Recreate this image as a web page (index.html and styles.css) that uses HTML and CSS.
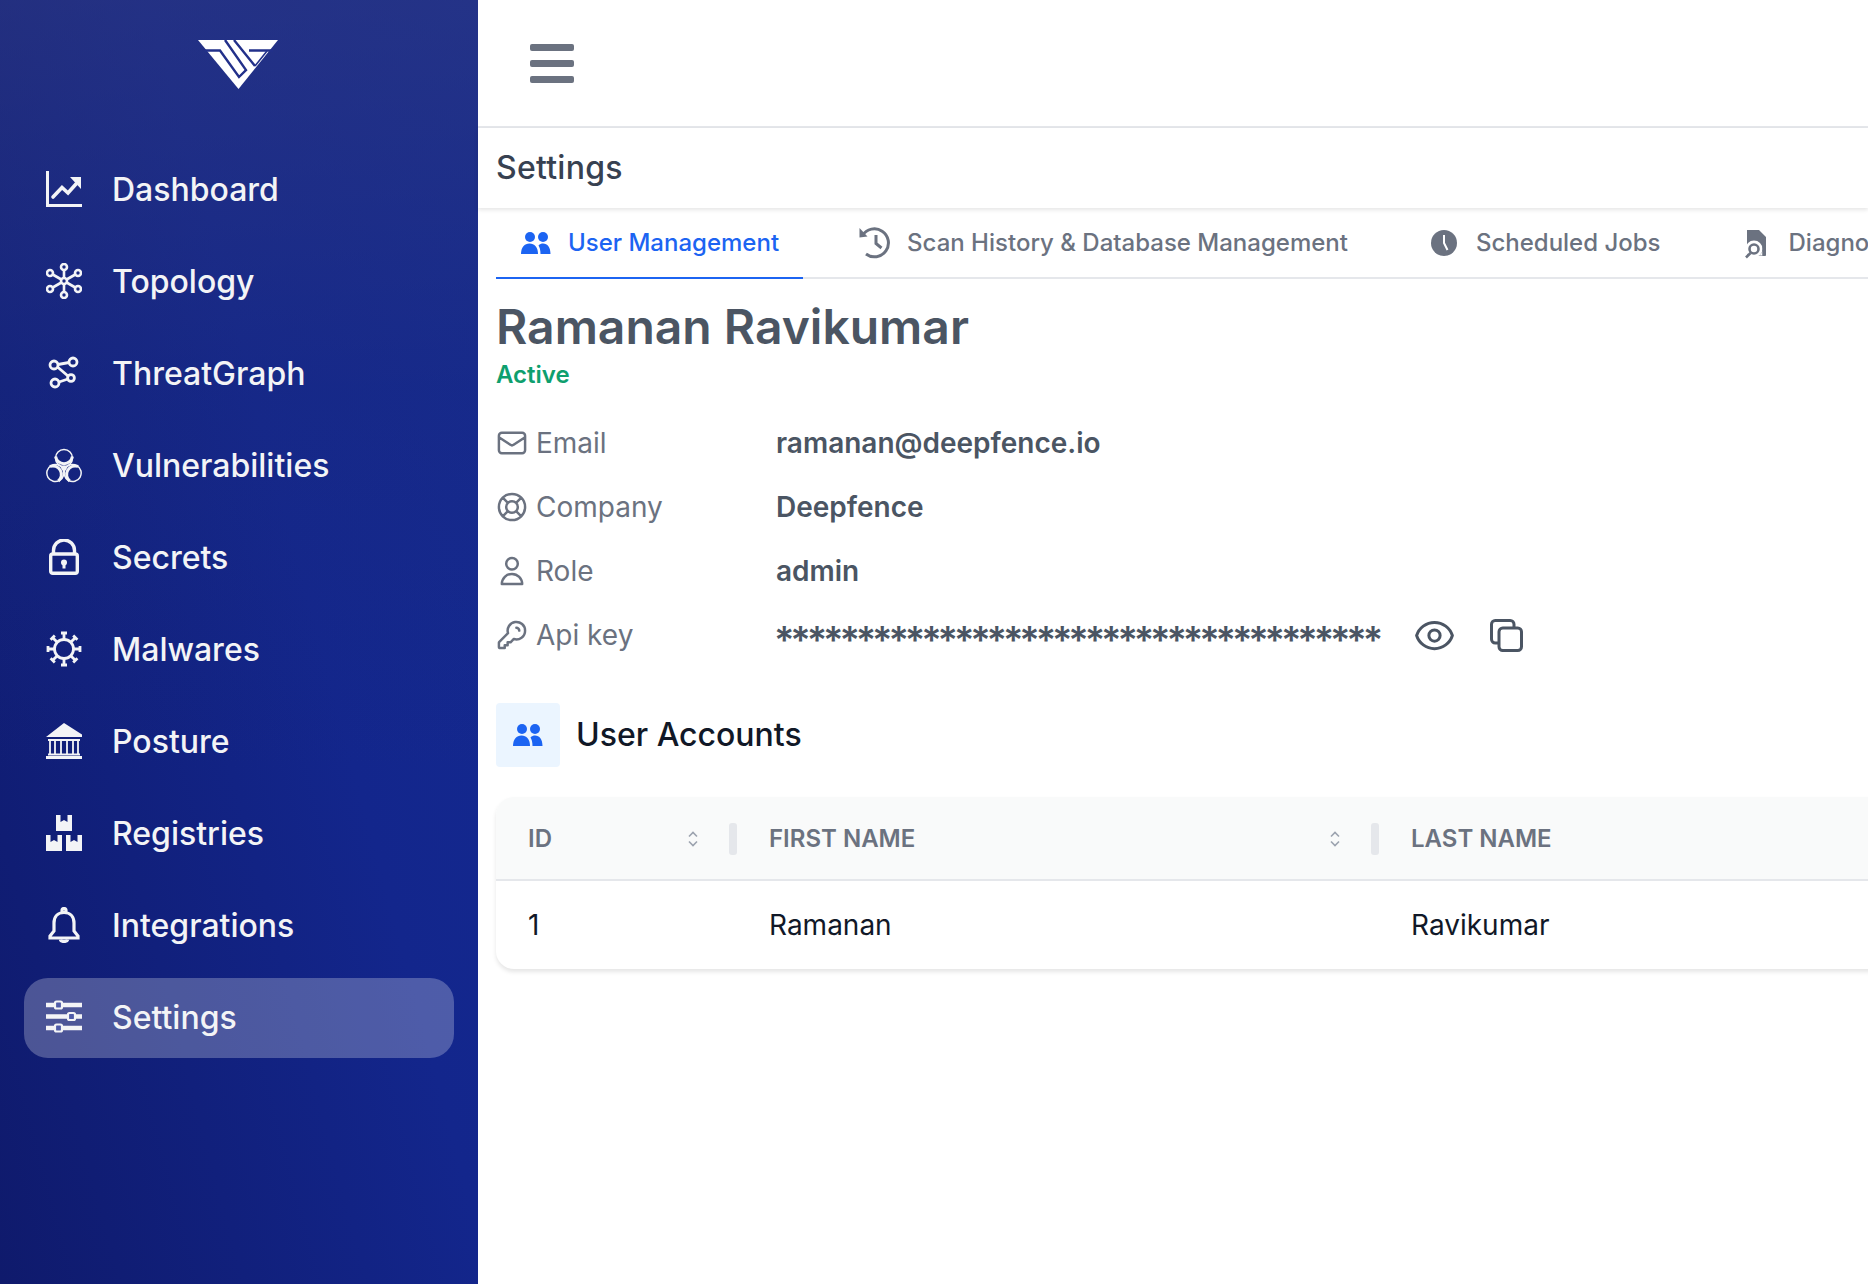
FILE: index.html
```html
<!DOCTYPE html>
<html>
<head>
    <meta charset="utf-8">
    <title>Settings</title>
    <link rel="stylesheet" href="styles.css">
</head>
<body>
<div class="app">
    <!-- Side navigation -->
    <aside class="sidebar">
        <div class="logo">
            <svg width="100" height="66" viewBox="0 0 100 66">
                <polygon points="9,8 89,8 49.5,57" fill="#fff"/>
                <path d="M16 18.5H31L50 45L57 38L36 8M45 8L66 34M60 18.5H84" fill="none" stroke="#22308a" stroke-width="2.4"/>
                <path d="M66 34L78 19" fill="none" stroke="#22308a" stroke-width="1.6"/>
            </svg>
        </div>
        <nav class="nav">
            <a class="nav-item">
                <svg class="nav-icon" viewBox="0 0 36 36"><path d="M1.5 0V34.5H36" fill="none" stroke="currentColor" stroke-width="3"/><path d="M7 26L16 16.5L22 22L30 13" fill="none" stroke="currentColor" stroke-width="3.6" stroke-linecap="round"/><polygon points="24,6 35,6 35,18" fill="currentColor"/></svg>
                Dashboard
            </a>
            <a class="nav-item">
                <svg class="nav-icon" viewBox="0 0 36 36" fill="none" stroke="currentColor" stroke-width="2.6"><circle cx="18" cy="18" r="3"/><circle cx="18" cy="4" r="3"/><circle cx="18" cy="32" r="3"/><circle cx="4" cy="10" r="3"/><circle cx="32" cy="10" r="3"/><circle cx="4" cy="26" r="3"/><circle cx="32" cy="26" r="3"/><path d="M18 7V15M18 21V29M6.7 11.500L15.400 16.500M20.600 19.500L29.300 24.500M6.700 24.500L15.400 19.500M20.600 16.500L29.300 11.500"/></svg>
                Topology
            </a>
            <a class="nav-item">
                <svg class="nav-icon" viewBox="0 0 36 36" fill="none" stroke="currentColor" stroke-width="2.8"><circle cx="8" cy="10" r="4"/><circle cx="27" cy="7" r="4"/><circle cx="9" cy="28" r="4"/><circle cx="25" cy="23" r="3.400"/><path d="M12 9.500L23 7.500M11.500 12L22 21M13 27L22 24"/></svg>
                ThreatGraph
            </a>
            <a class="nav-item">
                <svg class="nav-icon" viewBox="0 0 36 36" fill="none" stroke="currentColor" stroke-width="1.500">
                    <circle cx="18" cy="21" r="2.600" fill="currentColor" stroke="none"/>
                    <g>
                        <circle cx="18" cy="11" r="8.500"/>
                        <path d="M9.600 9.500A8.500 8.500 0 0 0 26.400 9.500" stroke-width="3"/>
                    </g>
                    <g transform="rotate(120 18 21)">
                        <circle cx="18" cy="11" r="8.500"/>
                        <path d="M9.600 9.500A8.500 8.500 0 0 0 26.400 9.500" stroke-width="3"/>
                    </g>
                    <g transform="rotate(240 18 21)">
                        <circle cx="18" cy="11" r="8.500"/>
                        <path d="M9.600 9.500A8.500 8.500 0 0 0 26.400 9.500" stroke-width="3"/>
                    </g>
                </svg>
                Vulnerabilities
            </a>
            <a class="nav-item">
                <svg class="nav-icon" viewBox="0 0 36 36"><path d="M7.500 15V11.500a10.500 10.500 0 0 1 21 0V15" fill="none" stroke="currentColor" stroke-width="3.400"/><rect x="4.700" y="15" width="26.600" height="19.300" rx="2" fill="none" stroke="currentColor" stroke-width="3.400"/><circle cx="18" cy="23.500" r="3" fill="currentColor"/><rect x="16.500" y="24" width="3" height="5.500" fill="currentColor"/></svg>
                Secrets
            </a>
            <a class="nav-item">
                <svg class="nav-icon" viewBox="0 0 36 36" fill="none" stroke="currentColor" stroke-width="2.800"><circle cx="18" cy="18" r="9.500"/><path d="M18 8.500V2M18 27.500V34M8.500 18H2M27.500 18H34M11.300 11.300L6.700 6.700M24.700 24.700L29.300 29.300M24.700 11.300L29.300 6.700M11.300 24.700L6.700 29.300"/><path d="M15 2H21M15 34H21M2 15V21M34 15V21M4.600 8.800L8.800 4.600M27.200 31.400L31.400 27.200M27.200 4.600L31.400 8.800M4.600 27.200L8.800 31.400"/></svg>
                Malwares
            </a>
            <a class="nav-item">
                <svg class="nav-icon" viewBox="0 0 36 36"><polygon points="18,0 36,11.500 36,14 0,14" fill="currentColor"/><rect x="2" y="16" width="32" height="2" fill="currentColor"/><path d="M4 18V31M9 18V31M15 18V31M21 18V31M27 18V31M32 18V31" stroke="currentColor" stroke-width="1.800"/><rect x="2" y="30.500" width="32" height="2" fill="currentColor"/><rect x="0" y="33" width="36" height="3" fill="currentColor"/></svg>
                Posture
            </a>
            <a class="nav-item">
                <svg class="nav-icon" viewBox="0 0 36 36" fill="currentColor"><path d="M10 0H14.500V7L18 5L21.500 7V0H26V16H10Z"/><path d="M0 20H4.500V27L8 25L11.500 27V20H16V36H0Z"/><path d="M20 20H24.500V27L28 25L31.500 27V20H36V36H20Z"/></svg>
                Registries
            </a>
            <a class="nav-item">
                <svg class="nav-icon" viewBox="0 0 36 36" fill="none" stroke="currentColor" stroke-width="3.200"><circle cx="18" cy="3.500" r="2"/><path d="M18 5.500C11.500 5.500 8 10 8 16V24L4 29V31H32V29L28 24V16C28 10 24.500 5.500 18 5.500Z"/><path d="M14.500 32.500C15 35 21 35 21.500 32.500" stroke-width="3.400"/></svg>
                Integrations
            </a>
            <a class="nav-item nav-active">
                <svg class="nav-icon" viewBox="0 0 36 36"><path d="M0 6H36M0 17.500H36M0 29H36" stroke="currentColor" stroke-width="4.500"/><rect x="9" y="2.500" width="7" height="7" rx="1.500" fill="#4f5ba8" stroke="currentColor" stroke-width="2.200"/><rect x="22" y="14" width="7" height="7" rx="1.500" fill="#4f5ba8" stroke="currentColor" stroke-width="2.200"/><rect x="9" y="25.500" width="7" height="7" rx="1.500" fill="#4f5ba8" stroke="currentColor" stroke-width="2.200"/></svg>
                Settings
            </a>
        </nav>
    </aside>

    <main class="main">
        <header class="topbar">
            <button class="menu-btn">
                <span></span><span></span><span></span>
            </button>
        </header>
        <div class="page-title">Settings</div>

        <div class="content">
            <!-- Tabs -->
            <div class="tabs">
                <a class="tab tab-active">
                    <svg class="tab-icon" viewBox="0 0 36 36" fill="currentColor"><circle cx="12" cy="12" r="5"/><circle cx="25" cy="12" r="5"/><path d="M3 29C3 22.500 6.500 18.500 11.500 18.500S20 22.500 20 29Z"/><path d="M22.500 29C22.500 25 21.500 22 20.500 20.500C21.800 19 23.500 18.500 25 18.500C29.500 18.500 32.500 22.500 32.500 29Z"/></svg>
                    User Management
                </a>
                <a class="tab">
                    <svg class="tab-icon" viewBox="0 0 36 36" fill="none" stroke="currentColor" stroke-width="3"><path d="M5.500 10.500A14 14 0 1 1 9 29"/><polygon points="2.500,3 10.500,11.500 2.500,12.500" fill="currentColor" stroke="none"/><path d="M19 10V18.500L24.500 23"/></svg>
                    Scan History &amp; Database Management
                </a>
                <a class="tab">
                    <svg class="tab-icon" viewBox="0 0 36 36"><circle cx="18" cy="18" r="13" fill="currentColor"/><path d="M18 10V18L21.500 25" fill="none" stroke="#fff" stroke-width="2"/></svg>
                    Scheduled Jobs
                </a>
                <a class="tab">
                    <svg class="tab-icon" viewBox="2 0 36 36"><path d="M10 5H22L29 12V29.500A1.500 1.500 0 0 1 27.500 31H10Z" fill="currentColor"/><circle cx="17" cy="24" r="8.500" fill="#fff"/><path d="M25.500 26V30.500H22A9 9 0 0 0 25.500 26Z" fill="#fff"/><rect x="25.500" y="18" width="3.500" height="12.500" fill="currentColor"/><circle cx="17" cy="24" r="4.500" fill="none" stroke="currentColor" stroke-width="2.600"/><path d="M13.500 28L9 32.500" stroke="currentColor" stroke-width="2.600"/></svg>
                    Diagnosis
                </a>
            </div>

            <!-- Profile -->
            <h1 class="user-name">Ramanan Ravikumar</h1>
            <div class="user-status">Active</div>

            <div class="info">
                <div class="info-row">
                    <div class="info-label">
                        <svg class="info-icon" viewBox="1 1 22 22"><path d="M3 8l7.890 5.260a2 2 0 002.220 0L21 8M5 19h14a2 2 0 002-2V7a2 2 0 00-2-2H5a2 2 0 00-2 2v10a2 2 0 002 2z"/></svg>
                        Email
                    </div>
                    <div class="info-value">ramanan@deepfence.io</div>
                </div>
                <div class="info-row">
                    <div class="info-label">
                        <svg class="info-icon" viewBox="1 1 22 22"><path d="M18.364 5.636l-3.536 3.536m0 5.656l3.536 3.536M9.172 9.172L5.636 5.636m3.536 9.192l-3.536 3.536M21 12a9 9 0 11-18 0 9 9 0 0118 0zm-5 0a4 4 0 11-8 0 4 4 0 018 0z"/></svg>
                        Company
                    </div>
                    <div class="info-value">Deepfence</div>
                </div>
                <div class="info-row">
                    <div class="info-label">
                        <svg class="info-icon" viewBox="1 1 22 22"><path d="M16 7a4 4 0 11-8 0 4 4 0 018 0zM12 14a7 7 0 00-7 7h14a7 7 0 00-7-7z"/></svg>
                        Role
                    </div>
                    <div class="info-value">admin</div>
                </div>
                <div class="info-row">
                    <div class="info-label">
                        <svg class="info-icon" viewBox="1 1 22 22"><path d="M15 7a2 2 0 012 2m4 0a6 6 0 01-7.743 5.743L11 17H9v2H7v2H4a1 1 0 01-1-1v-2.586a1 1 0 01.293-.707l5.964-5.964A6 6 0 1121 9z"/></svg>
                        Api key
                    </div>
                    <div class="info-value key-stars">*************************************</div>
                    <svg class="key-icon key-eye" viewBox="0 0 24 24"><path d="M15 12a3 3 0 11-6 0 3 3 0 016 0z"/><path d="M2.458 12C3.732 7.943 7.523 5 12 5c4.478 0 8.268 2.943 9.542 7-1.274 4.057-5.064 7-9.542 7-4.477 0-8.268-2.943-9.542-7z"/></svg>
                    <svg class="key-icon" viewBox="0 0 24 24"><path d="M8 16H6a2 2 0 01-2-2V6a2 2 0 012-2h8a2 2 0 012 2v2m-6 12h8a2 2 0 002-2v-8a2 2 0 00-2-2h-8a2 2 0 00-2 2v8a2 2 0 002 2z"/></svg>
                </div>
            </div>

            <!-- User accounts table -->
            <div class="section-head">
                <div class="section-icon">
                    <svg width="36" height="36" viewBox="0 0 36 36" fill="currentColor"><circle cx="12" cy="12" r="5"/><circle cx="25" cy="12" r="5"/><path d="M3 29C3 22.500 6.500 18.500 11.500 18.500S20 22.500 20 29Z"/><path d="M22.500 29C22.500 25 21.500 22 20.500 20.500C21.800 19 23.500 18.500 25 18.500C29.500 18.500 32.500 22.500 32.500 29Z"/></svg>
                </div>
                <h2 class="section-title">User Accounts</h2>
            </div>

            <div class="table-card">
                <div class="table-head">
                    <div class="col col-id">
                        ID
                        <svg class="sort-icon" viewBox="0 0 12 16"><path d="M2 5.500L6 1.500L10 5.500M2 10.500L6 14.500L10 10.500"/></svg>
                        <span class="resizer"></span>
                    </div>
                    <div class="col col-first">
                        FIRST NAME
                        <svg class="sort-icon" viewBox="0 0 12 16"><path d="M2 5.500L6 1.500L10 5.500M2 10.500L6 14.500L10 10.500"/></svg>
                        <span class="resizer"></span>
                    </div>
                    <div class="col col-last">LAST NAME</div>
                </div>
                <div class="table-row">
                    <div class="col col-id">1</div>
                    <div class="col col-first">Ramanan</div>
                    <div class="col col-last">Ravikumar</div>
                </div>
            </div>
        </div>
    </main>
</div>
</body>
</html>
```
FILE: styles.css
```css
* {
    box-sizing: border-box;
}

html, body {
    margin: 0;
    height: 100%;
    overflow: hidden;
    background: #fff;
    font-family: Inter, "Liberation Sans", sans-serif;
}

.app {
    display: flex;
    width: 1868px;
    height: 1284px;
    overflow: hidden;
}

/* Sidebar */
.sidebar {
    flex: 0 0 478px;
    background:
        linear-gradient(to bottom, rgba(52, 60, 125, 0.5) 0, rgba(30, 45, 125, 0.3) 30%, rgba(20, 30, 110, 0) 60%),
        linear-gradient(75deg, #0f1a6c 0, #13268c 60%, #142a92 100%);
}

.logo {
    display: flex;
    justify-content: center;
    height: 150px;
    padding-top: 32px;
}

.logo svg {
    display: block;
}

.nav {
    display: flex;
    flex-direction: column;
    gap: 12px;
    padding: 0 24px;
}

.nav-item {
    display: flex;
    align-items: center;
    gap: 30px;
    height: 80px;
    padding: 0 0 2px 22px;
    border-radius: 24px;
    color: #f3f4f6;
    font-size: 32px;
    font-weight: 500;
}

.nav-icon {
    flex: 0 0 36px;
    width: 36px;
    height: 36px;
}

.nav-active {
    background: rgba(255, 255, 255, 0.25);
}

/* Main area */
.main {
    flex: 1;
    min-width: 0;
    display: flex;
    flex-direction: column;
}

.topbar {
    flex: 0 0 128px;
    display: flex;
    align-items: center;
    padding-left: 52px;
    border-bottom: 2px solid #e5e7eb;
}

.menu-btn {
    display: flex;
    flex-direction: column;
    gap: 9px;
    width: 44px;
    padding: 0;
    border: 0;
    background: none;
}

.menu-btn span {
    display: block;
    height: 7px;
    border-radius: 2px;
    background: #6b7280;
}

.page-title {
    flex: 0 0 80px;
    display: flex;
    align-items: center;
    padding: 0 18px 2px;
    font-size: 32px;
    font-weight: 500;
    letter-spacing: 0.25px;
    color: #374151;
    box-shadow: 0 2px 4px rgba(0, 0, 0, 0.1);
}

.content {
    padding: 0 0 0 18px;
}

/* Tabs */
.tabs {
    display: flex;
    gap: 32px;
    height: 71px;
    border-bottom: 2px solid #e5e7eb;
    white-space: nowrap;
}

.tab {
    display: flex;
    align-items: center;
    gap: 14px;
    height: 71px;
    padding: 0 24px 0 22px;
    border-bottom: 2px solid transparent;
    font-size: 24px;
    font-weight: 500;
    color: #6b7280;
}

.tab-active {
    color: #1c64f2;
    border-bottom-color: #1c64f2;
}

.tab-icon {
    flex: 0 0 36px;
    width: 36px;
    height: 36px;
}

/* Profile */
.user-name {
    margin: 18px 0 0;
    font-size: 48px;
    line-height: 60px;
    font-weight: 600;
    color: #4b5563;
}

.user-status {
    margin-top: 2px;
    font-size: 24px;
    line-height: 32px;
    font-weight: 600;
    color: #0e9f6e;
}

.info {
    margin-top: 20px;
}

.info-row {
    display: flex;
    align-items: center;
    height: 64px;
}

.info-label {
    flex: 0 0 280px;
    display: flex;
    align-items: center;
    gap: 8px;
    font-size: 28px;
    color: #6b7280;
}

.info-icon {
    flex: 0 0 32px;
    width: 32px;
    height: 32px;
    fill: none;
    stroke: #6b7280;
    stroke-width: 1.7;
    stroke-linecap: round;
    stroke-linejoin: round;
}

.info-value {
    font-size: 28px;
    font-weight: 600;
    color: #4b5563;
}

/* the asterisks are drawn bigger and tighter than the regular value text */
.key-stars {
    margin-left: -2px;
    padding-top: 10px;
    font-size: 38px;
    letter-spacing: -4.15px;
}

.key-icon {
    width: 45px;
    height: 45px;
    margin-left: 27px;
    fill: none;
    stroke: #4b5563;
    stroke-width: 1.6;
    stroke-linecap: round;
    stroke-linejoin: round;
}

.key-eye {
    margin-left: 33px;
}

/* Section heading */
.section-head {
    display: flex;
    align-items: center;
    gap: 16px;
    margin-top: 36px;
}

.section-icon {
    display: flex;
    align-items: center;
    justify-content: center;
    width: 64px;
    height: 64px;
    border-radius: 4px;
    background: #ebf5ff;
    color: #1c64f2;
}

.section-title {
    margin: 0 0 2px;
    font-size: 32px;
    font-weight: 500;
    color: #111827;
}

/* Table */
.table-card {
    width: 1500px;
    margin-top: 30px;
    border-radius: 18px;
    background: #fff;
    box-shadow: 0 3px 4px rgba(0, 0, 0, 0.1);
    overflow: hidden;
}

.table-head {
    display: flex;
    height: 84px;
    background: #f9fafa;
    border-bottom: 2px solid #e5e7eb;
    font-size: 24px;
    font-weight: 600;
    color: #6b7280;
}

.table-row {
    display: flex;
    height: 88px;
    font-size: 28px;
    color: #111827;
}

.col {
    position: relative;
    display: flex;
    align-items: center;
    padding-left: 32px;
}

.col-id {
    flex: 0 0 241px;
}

.col-first {
    flex: 0 0 642px;
}

.col-last {
    flex: 1;
}

.sort-icon {
    position: absolute;
    right: 38px;
    top: 34px;
    width: 12px;
    height: 16px;
    fill: none;
    stroke: #9ca3af;
    stroke-width: 1.6;
}

.resizer {
    position: absolute;
    right: 0;
    top: 26px;
    width: 8px;
    height: 32px;
    border-radius: 3px;
    background: #e5e7eb;
}
```
